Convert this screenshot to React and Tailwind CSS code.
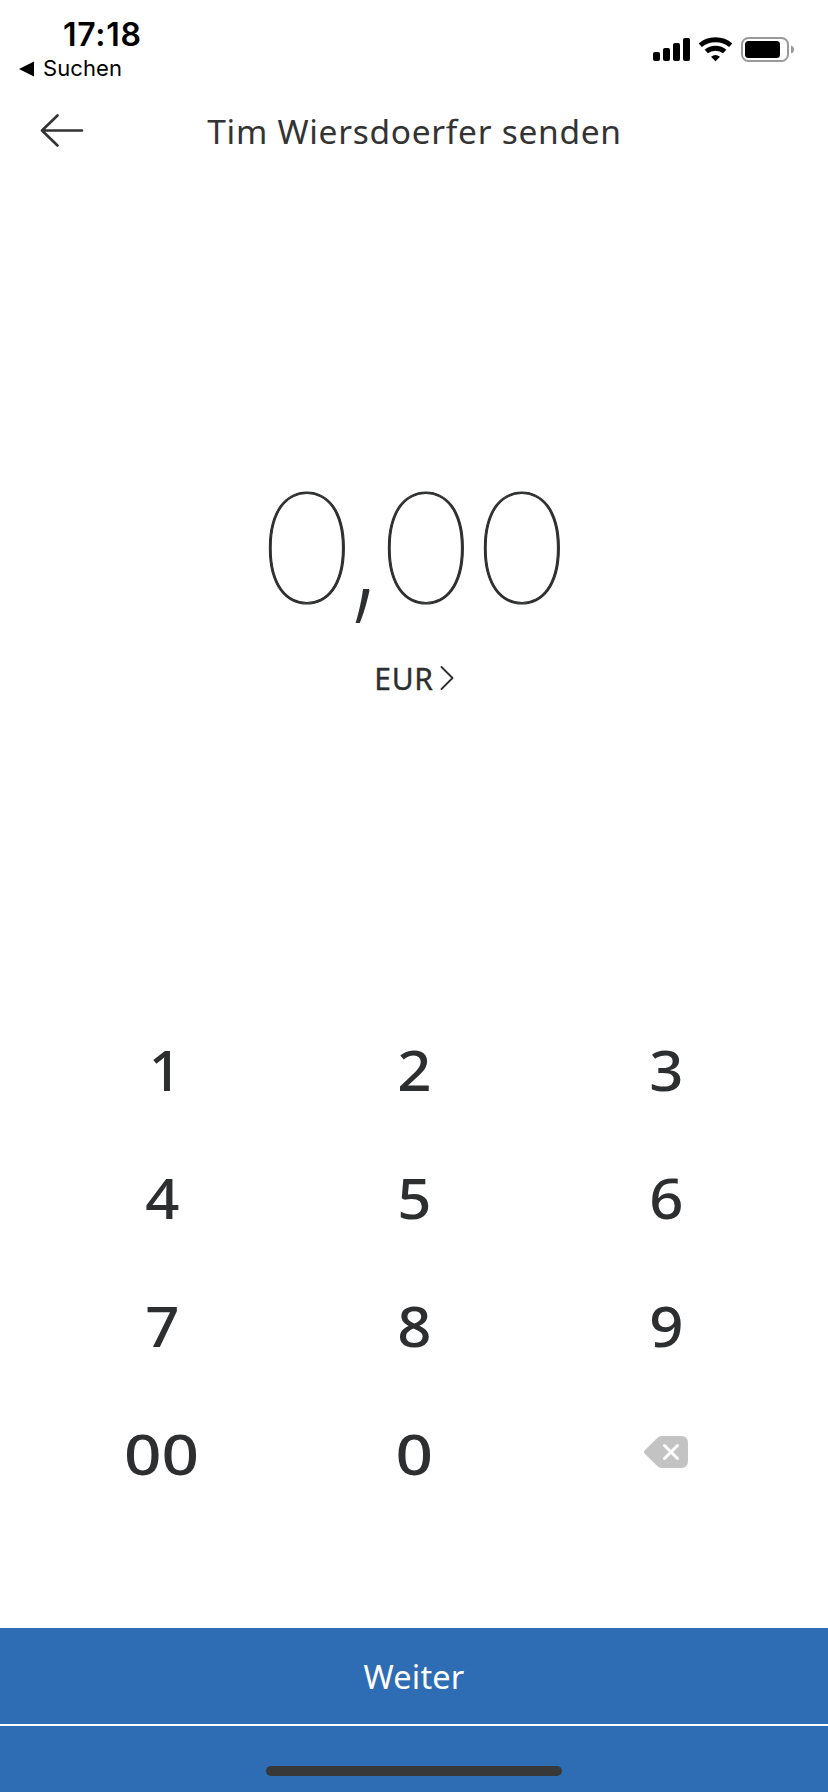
const keys = ["1", "2", "3", "4", "5", "6", "7", "8", "9", "00", "0"];

function keyClass(key) {
  if (key === "00") return "scale-x-115";
  if (key === "0") return "scale-x-115";
  if (key === "1") return "translate-x-[3px] scale-x-100";
  return "scale-x-105";
}

function StatusBar() {
  return (
    <div className="flex h-[88px] shrink-0 justify-between text-black">
      <div className="flex flex-col font-['Inter',sans-serif]">
        <div className="mt-[17px] ml-[63px] h-9 text-[32px] leading-9 font-semibold tracking-[0.7px]">17:18</div>
        <div className="-mt-px ml-[19px] flex h-8 items-center gap-[9px]">
          <svg className="mt-px" width="15" height="16" viewBox="0 0 15 16"><path d="M0 8L15 .5v15z" /></svg>
          <span className="text-[22px] leading-8 tracking-[0.1px]">Suchen</span>
        </div>
      </div>
      <svg className="mt-[36px] mr-[33px]" width="142" height="27" viewBox="0 0 142 27">
        <rect x="0" y="16" width="7" height="9" rx="2" />
        <rect x="10" y="12" width="7" height="13" rx="2" />
        <rect x="20" y="7" width="7" height="18" rx="2" />
        <rect x="30" y="2" width="7" height="23" rx="2" />
        <g fill="none" stroke="#000" strokeWidth="4.8">
          <path d="M47.3 9.3C55.5 1.9 69.5 1.9 77.7 9.3" />
          <path d="M53.3 15.6C58.2 11.1 66.8 11.1 71.7 15.6" />
        </g>
        <path d="M58 20.8q4.5-3.7 9 0L62.500 25.200z" />
        <rect x="89" y="2" width="46" height="23" rx="6.5" fill="none" stroke="#999" strokeWidth="2" />
        <rect x="92" y="5" width="35" height="17" rx="3.5" />
        <path d="M138 9.5q3 1 3 4t-3 4z" fill="#999" />
      </svg>
    </div>
  );
}

function Header() {
  return (
    <header className="grid h-[86px] shrink-0 grid-cols-[100px_1fr_100px] items-center text-[#333]">
      <button className="ml-[40px] h-[34px] w-[44px]" aria-label="Zurück">
        <svg width="44" height="34" viewBox="0 0 44 34" fill="none" stroke="#333" strokeWidth="2.6" strokeLinecap="round" strokeLinejoin="round">
          <path d="M42 16.5H2M17.5 1.5L2 16.5l15.5 15" />
        </svg>
      </button>
      <h1 className="pl-px text-center font-['Noto_Sans',sans-serif] text-[33.5px] leading-[48px] tracking-[0.7px] whitespace-nowrap">Tim Wiersdoerfer senden</h1>
    </header>
  );
}

function Amount() {
  return (
    <div className="flex h-[200px] font-['Lato',sans-serif] text-[156px] leading-[198px] font-thin [-webkit-text-stroke:1.1px_#2c2e2f]">
      <span className="w-24 scale-x-97 text-center">0</span>
      <span className="flex w-[23px] justify-center pt-2 pr-1 font-['Noto_Sans',sans-serif] text-[138px] font-extralight [-webkit-text-stroke:0]">,</span>
      <span className="w-24 scale-x-97 text-center">0</span>
      <span className="w-24 scale-x-97 text-center">0</span>
    </div>
  );
}

export default function App() {
  return (
    <main className="flex h-[1792px] w-[828px] flex-col overflow-hidden bg-white font-['Noto_Sans',sans-serif] text-[#2c2e2f]">
      <StatusBar />
      <Header />
      <section className="flex h-[831px] shrink-0 flex-col items-center pt-[270px]">
        <Amount />
        <button className="mt-[15px] flex h-10 items-center gap-[6px] text-[30px] leading-10">
          <span className="tracking-[0.7px] [-webkit-text-stroke:0.3px_#2c2e2f]">EUR</span>
          <svg className="-mt-[2px]" width="14" height="24" viewBox="0 0 14 24" fill="none" stroke="#2c2e2f" strokeWidth="1.8" strokeLinecap="round" strokeLinejoin="round">
            <path d="M1.5 1L12.5 12 1.5 23" />
          </svg>
        </button>
      </section>
      <section className="grid h-[512px] shrink-0 grid-cols-3 grid-rows-4 px-9">
        {keys.map((k) => (
          <button key={k} className="flex items-center justify-center text-[57px] leading-[128px] font-medium">
            <span className={keyClass(k)}>{k}</span>
          </button>
        ))}
        <button className="flex items-center justify-center pb-[2px]" aria-label="Löschen">
          <svg width="44" height="32" viewBox="0 0 44 32">
            <path d="M.7 14.3L13 2.3Q15.3 0 18.5 0H37q7 0 7 7v18q0 7-7 7H18.5Q15.3 32 13 29.7L.7 17.7Q-.7 16 .7 14.3z" fill="#c3c3c3" />
            <path d="M20.5 9.5l13 13m0-13l-13 13" stroke="#fff" strokeWidth="3" strokeLinecap="round" />
          </svg>
        </button>
      </section>
      <footer className="mt-auto flex h-[164px] shrink-0 flex-col gap-[2px] bg-white">
        <button className="h-24 bg-[#2e6db4] pt-px text-[32.5px] leading-24 tracking-[0.2px] text-white">Weiter</button>
        <div className="flex h-[66px] justify-center bg-[#2e6db4] pt-10">
          <div className="h-[10px] w-[296px] rounded-full bg-[#383838]" />
        </div>
      </footer>
    </main>
  );
}
